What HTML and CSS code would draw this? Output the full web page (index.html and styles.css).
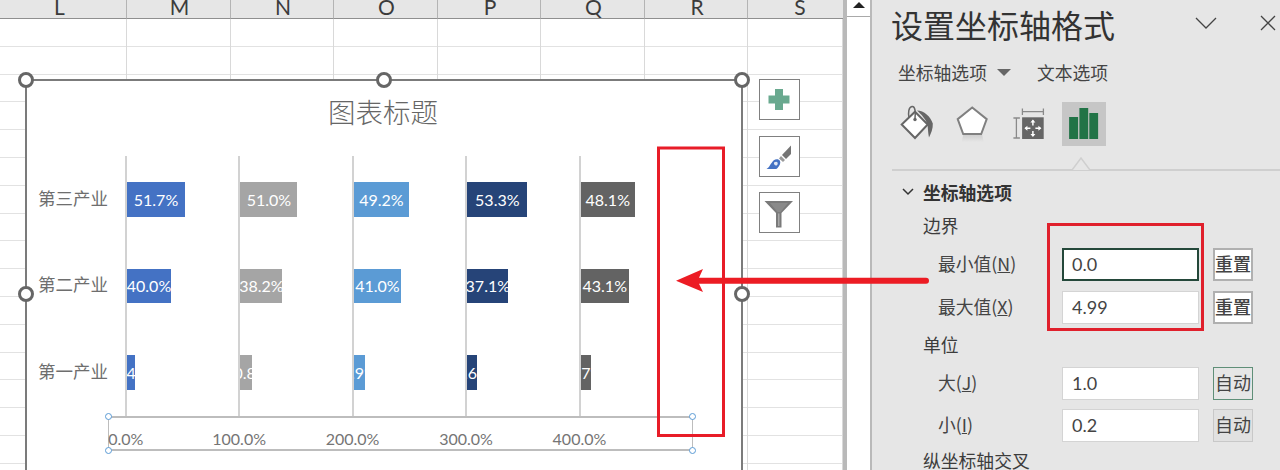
FILE: index.html
```html
<!DOCTYPE html>
<html lang="zh-CN">
<head>
<meta charset="utf-8">
<title>设置坐标轴格式</title>
<link rel="stylesheet" href="styles.css">
</head>
<body>
<div class="app">
  <section class="sheet">
    <div class="col-head">L</div><div class="col-head">M</div><div class="col-head">N</div><div class="col-head">O</div><div class="col-head">P</div><div class="col-head">Q</div><div class="col-head">R</div><div class="col-head">S</div>
    <div class="col-body"></div><div class="col-body"></div><div class="col-body"></div><div class="col-body"></div><div class="col-body"></div><div class="col-body"></div><div class="col-body"></div><div class="col-body"></div>

    <div class="chart">
      <div class="chart-title">图表标题</div>
      <div class="plot">
        <div class="cat">第三产业</div>
        <div class="cell"><div class="bar s1" style="width:58px"><span>51.7%</span></div></div>
        <div class="cell"><div class="bar s2" style="width:57px"><span>51.0%</span></div></div>
        <div class="cell"><div class="bar s3" style="width:55px"><span>49.2%</span></div></div>
        <div class="cell"><div class="bar s4" style="width:60px"><span>53.3%</span></div></div>
        <div class="cell"><div class="bar s5" style="width:54px"><span>48.1%</span></div></div>
        <div class="cat">第二产业</div>
        <div class="cell"><div class="bar s1" style="width:44px"><span>40.0%</span></div></div>
        <div class="cell"><div class="bar s2" style="width:42px"><span>38.2%</span></div></div>
        <div class="cell"><div class="bar s3" style="width:47px"><span>41.0%</span></div></div>
        <div class="cell"><div class="bar s4" style="width:41px"><span>37.1%</span></div></div>
        <div class="cell"><div class="bar s5" style="width:48px"><span>43.1%</span></div></div>
        <div class="cat">第一产业</div>
        <div class="cell"><div class="bar s1" style="width:8px"><span>8.4%</span></div></div>
        <div class="cell"><div class="bar s2" style="width:12px"><span>10.8%</span></div></div>
        <div class="cell"><div class="bar s3" style="width:11px"><span>9.9%</span></div></div>
        <div class="cell"><div class="bar s4" style="width:10px"><span>9.6%</span></div></div>
        <div class="cell"><div class="bar s5" style="width:10px"><span>8.7%</span></div></div>
      </div>
      <div class="axis">
        <div class="ticks"><span>0.0%</span><span>100.0%</span><span>200.0%</span><span>300.0%</span><span>400.0%</span></div>
        <i class="dot dot-tl"></i><i class="dot dot-tr"></i><i class="dot dot-bl"></i><i class="dot dot-br"></i>
      </div>
      <div class="legend"><span>年份</span><span>年份</span><span>年份</span><span>年份</span><span>年份</span><span>年份</span><span>年份</span><span>年份</span><span>年份</span></div>
      <i class="handle h-tl"></i><i class="handle h-tm"></i><i class="handle h-tr"></i><i class="handle h-ml"></i><i class="handle h-mr"></i>
    </div>

    <div class="chart-tools">
      <button class="tool" type="button" aria-label="图表元素">
        <svg viewBox="760 80 39 39" width="39" height="39"><path d="M775 89h8v6.500h6.500v8H783v6.500h-8v-6.500h-6.500v-8h6.500z" fill="#69a98f"/></svg>
      </button>
      <button class="tool" type="button" aria-label="图表样式">
        <svg viewBox="760 136.500 39 39" width="39" height="39">
          <path d="M791 145 791 153.500 786 158.500 782 154.500z" fill="#757575"/>
          <path d="M781 155.500 785 159.500 783 161.500 779 158z" fill="#9a9a9a"/>
          <path d="M766.500 168.500c3-1.500 4-5.500 7-8.500 2.500-2 5.500-1.500 6.500.5 1 2-.5 5-2.500 7-.5.500-1 1-1.500 1z" fill="#4472c4"/>
          <path d="M774 162c1.500-1 3-1 3.500 0 .5 1 0 2.500-1 3-1.500.5-3-1.500-2.500-3z" fill="#dfe7f5"/>
        </svg>
      </button>
      <button class="tool" type="button" aria-label="图表筛选器">
        <svg viewBox="760 193 39 39" width="39" height="39">
          <path d="M764.500 201h28.500l-11.500 12v14.500h-5.500V213z" fill="#7a7a7a"/>
          <path d="M770 203h18l-7.500 9h-3z" fill="#8a8a8a"/>
          <path d="M778 213.500h1.500V226H778z" fill="#a8a8a8"/>
        </svg>
      </button>
    </div>
  </section>

  <aside class="scrollbar"><div class="scroll-up"><i class="up-arrow"></i></div></aside>

  <aside class="pane">
    <header class="pane-head">
      <h1 class="pane-title">设置坐标轴格式</h1>
      <svg class="head-icon chev" viewBox="0 0 22 12" width="22" height="12"><path d="M1 1l10 10L21 1" fill="none" stroke="#444" stroke-width="1.300"/></svg>
      <svg class="head-icon close" viewBox="0 0 16 16" width="16" height="16"><path d="M1 1l14 14M15 1L1 15" fill="none" stroke="#444" stroke-width="1.300"/></svg>
    </header>
    <nav class="tabs">
      <span class="tab">坐标轴选项</span>
      <i class="tab-caret"></i>
      <span class="tab tab-text">文本选项</span>
    </nav>
    <div class="icon-row">
      <svg class="opt-icon" viewBox="893 102 44 44" width="44" height="44">
        <path d="M915 111.700 927.700 124.500 915 138 901.700 124.500z" fill="#fff" stroke="#666" stroke-width="2"/>
        <path d="M909 118c-1-5-.5-11 3-11.500 3.500-.5 3.500 6 3 12" fill="none" stroke="#666" stroke-width="1.500"/>
        <circle cx="915" cy="119.500" r="1.700" fill="#666"/>
        <path d="M917 110.500c7 0 13.500 6 15.800 13 .3 5-1.800 10-3.800 14-1-5-1-9-1.500-13-1.500-5-6-10-10.500-14z" fill="#666"/>
      </svg>
      <svg class="opt-icon" viewBox="949.300 102 44 44" width="44" height="44">
        <defs><linearGradient id="fade" x1="0" y1="0" x2="0" y2="1"><stop offset="0" stop-color="#cfcfcf"/><stop offset="1" stop-color="#e6e6e6"/></linearGradient></defs>
        <path d="M963.500 135h19l1.500 7h-22z" fill="url(#fade)"/>
        <path d="M972.500 107.500 987 119.200 981.500 134h-18L958 119.200z" fill="#fff" stroke="#808080" stroke-width="2"/>
      </svg>
      <svg class="opt-icon" viewBox="1005.600 102 44 44" width="44" height="44">
        <path d="M1022 111.700h21M1022 108.500v6.500M1043 108.500v6.500M1016 118v20M1013 118h6.500M1013 138h6.500" fill="none" stroke="#8a8a8a" stroke-width="1.300"/>
        <rect x="1021.700" y="117.300" width="21.600" height="21.700" fill="#666"/>
        <path d="M1032.500 120.500v5M1032.500 131v5M1025 128.200h5M1035 128.200h5" stroke="#fff" stroke-width="1.500"/>
        <path d="M1032.500 119.500l2.500 3h-5zM1032.500 137l2.500-3h-5zM1024 128.200l3-2.500v5zM1041 128.200l-3-2.500v5z" fill="#fff"/>
      </svg>
      <svg class="opt-icon active" viewBox="1061.900 102 44 44" width="44" height="44">
        <rect x="1069" y="117" width="9" height="22" fill="#217346"/>
        <rect x="1079.300" y="108" width="8.800" height="31" fill="#217346"/>
        <rect x="1089.200" y="113" width="8.800" height="26" fill="#217346"/>
      </svg>
    </div>
    <div class="divider">
      <svg class="notch" viewBox="0 0 18 14" width="18" height="14"><path d="M0 13 9 1l9 12" fill="#e6e6e6" stroke="#cfcfcf" stroke-width="1.500"/></svg>
    </div>
    <div class="section-head">
      <svg viewBox="0 0 12 8" width="12" height="8"><path d="M1 1l5 5 5-5" fill="none" stroke="#333" stroke-width="1.500"/></svg>
      <strong>坐标轴选项</strong>
    </div>
    <div class="group-label">边界</div>
    <div class="field">
      <label class="field-label">最小值(<u>N</u>)</label>
      <div class="input focused">0.0</div>
      <div class="btn btn-reset">重置</div>
    </div>
    <div class="field gap-10">
      <label class="field-label">最大值(<u>X</u>)</label>
      <div class="input">4.99</div>
      <div class="btn btn-reset">重置</div>
    </div>
    <div class="group-label gap-4">单位</div>
    <div class="field">
      <label class="field-label">大(<u>J</u>)</label>
      <div class="input">1.0</div>
      <div class="btn btn-auto-on">自动</div>
    </div>
    <div class="field gap-9">
      <label class="field-label">小(<u>I</u>)</label>
      <div class="input">0.2</div>
      <div class="btn btn-auto">自动</div>
    </div>
    <div class="group-label gap-2">纵坐标轴交叉</div>
  </aside>
</div>

<svg class="annotations" viewBox="0 0 1280 470" width="1280" height="470">
  <rect x="658.500" y="148" width="65" height="287.500" fill="none" stroke="#e81c28" stroke-width="3"/>
  <rect x="1048.500" y="224.500" width="154" height="105" fill="none" stroke="#e0202c" stroke-width="3"/>
  <path d="M703 269 676 280.700 703 292 699 283.700H926a3 3 0 0 0 0-6H699z" fill="#ec1c24"/>
</svg>
</body>
</html>
```
FILE: styles.css
```css
* { box-sizing: border-box; }
html, body { margin: 0; padding: 0; width: 1280px; height: 470px; overflow: hidden; background: #fff; }
body { font-family: "Noto Sans CJK SC", "Noto Sans", sans-serif; color: #444; }

.app { display: flex; width: 1280px; height: 470px; }

/* Worksheet */
.sheet {
  position: relative;
  width: 847px;
  height: 470px;
  overflow: hidden;
  display: grid;
  grid-template-columns: 127px 104px 103px 104px 103px 104px 103px 95px;
  grid-template-rows: 19px 451px;
  border-right: 4px solid #b9b9b9;
  background: #fff;
}
.col-head {
  background: #e6e6e6;
  border-right: 1px solid #b4b4b4;
  border-bottom: 1px solid #8f8f8f;
  padding-left: 2px;
  font-family: Lato, "Liberation Sans", sans-serif;
  font-size: 21px;
  line-height: 14px;
  color: #3b3b3b;
  text-align: center;
  overflow: hidden;
}
.col-head:first-child { padding: 0 7px 0 0; }
.col-head:nth-child(8) { border-right: 0; padding-left: 9px; }
.col-body {
  border-right: 1px solid #d9d9d9;
  background-image: repeating-linear-gradient(to bottom, transparent 0, transparent 26.8px, #e2e2e2 26.8px, #e2e2e2 27.8px);
}
.col-body:last-of-type { border-right: 0; }

/* Chart */
.chart {
  position: absolute;
  left: 25px;
  top: 79px;
  width: 718px;
  height: 460px;
  border: 2px solid #7b7b7b;
  background: #fff;
}
.chart-title {
  height: 62px;
  margin-bottom: 13px;
  padding: 0 2px 3px 0;
  display: flex;
  align-items: center;
  justify-content: center;
  font-size: 27.500px;
  font-weight: 300;
  color: #666;
}
.plot {
  display: grid;
  grid-template-columns: 98px repeat(5, 113.450px);
  grid-template-rows: repeat(3, 86.670px);
}
.cat {
  display: flex;
  align-items: center;
  padding: 0 0 4px 11px;
  font-size: 17.500px;
  font-weight: 400;
  color: #6e6e6e;
}
.cell {
  display: flex;
  align-items: center;
  border-left: 2px solid #d2d2d2;
}
.bar {
  height: 34.500px;
  display: flex;
  align-items: center;
  justify-content: center;
  overflow: hidden;
  flex: none;
  color: #fff;
  font-family: Lato, "Liberation Sans", sans-serif;
  font-size: 16px;
  white-space: nowrap;
}
.bar span { flex: none; }
.s1 { background: #4472c4; }
.s2 { background: #a5a5a5; }
.s3 { background: #5b9bd5; }
.s4 { background: #264478; }
.s5 { background: #636363; }

.axis {
  position: relative;
  width: 585px;
  height: 35px;
  margin-left: 81px;
  border: 1px solid #bdbdbd;
  border-top-width: 2px;
  border-bottom-width: 2px;
  background: #fff;
}
.ticks {
  display: flex;
  margin-left: -40px;
  padding-top: 10px;
  font-family: Lato, "Liberation Sans", sans-serif;
  font-size: 16px;
  line-height: 22px;
  color: #757575;
}
.ticks span { flex: 0 0 113.450px; text-align: center; }
.dot {
  position: absolute;
  width: 7px;
  height: 7px;
  border: 1.500px solid #5b9bd5;
  border-radius: 50%;
  background: #fff;
}
.dot-tl { left: -4px; top: -5px; }
.dot-tr { right: -4px; top: -5px; }
.dot-bl { left: -4px; bottom: -5px; }
.dot-br { right: -4px; bottom: -5px; }

.legend {
  display: flex;
  margin: 17px 0 0 72px;
  font-size: 18px;
  line-height: 20px;
  color: #777;
}
.legend span { flex: 0 0 71px; }

.handle {
  position: absolute;
  width: 16px;
  height: 16px;
  border: 3px solid #666;
  border-radius: 50%;
  background: #fff;
}
.h-tl { left: -9px; top: -9px; }
.h-tm { left: 349px; top: -9px; }
.h-tr { left: 707px; top: -9px; }
.h-ml { left: -9px; top: 205px; }
.h-mr { left: 707px; top: 205px; }

.chart-tools {
  position: absolute;
  left: 759px;
  top: 79px;
  display: flex;
  flex-direction: column;
  gap: 15.500px;
}
.tool {
  width: 41px;
  height: 41px;
  padding: 0;
  border: 1px solid #808080;
  background: #fff;
  display: block;
}
.tool svg { display: block; }

/* Scrollbar */
.scrollbar { width: 23px; height: 470px; background: #fff; }
.scroll-up {
  height: 17px;
  border-bottom: 1px solid #a9a9a9;
  display: flex;
  justify-content: center;
  padding-top: 2px;
}
.up-arrow {
  width: 0;
  height: 0;
  border-left: 6px solid transparent;
  border-right: 6px solid transparent;
  border-bottom: 6px solid #222;
}

/* Format pane */
.pane {
  width: 410px;
  height: 470px;
  overflow: hidden;
  background: #e6e6e6;
  border-left: 2px solid #b9b9b9;
}
.pane-head {
  position: relative;
  height: 52px;
  padding-left: 19px;
  display: flex;
  align-items: flex-start;
}
.pane-title {
  margin: 0;
  font-size: 32px;
  font-weight: 400;
  color: #333;
  line-height: 48px;
}
.head-icon { position: absolute; top: 15px; }
.chev { left: 323px; top: 17px; }
.close { left: 388px; }

.tabs {
  height: 42px;
  padding: 0 0 2px 26px;
  display: flex;
  align-items: center;
  font-size: 17.800px;
  color: #444;
}
.tab-caret {
  width: 0;
  height: 0;
  margin-left: 10px;
  border-left: 7px solid transparent;
  border-right: 7px solid transparent;
  border-top: 7px solid #666;
}
.tab-text { margin-left: 26px; }

.icon-row {
  display: flex;
  gap: 12.300px;
  height: 44px;
  margin-top: 8px;
  padding-left: 21px;
}
.opt-icon { display: block; flex: none; }
.opt-icon.active { background: #c6c6c6; }

.divider {
  position: relative;
  height: 2px;
  margin: 23px 0 0 20px;
  background: #cfcfcf;
}
.notch { position: absolute; left: 180px; top: -12px; }

.section-head {
  height: 32px;
  margin-top: 6px;
  padding: 0 0 2px 30px;
  display: flex;
  align-items: center;
  gap: 9px;
  font-size: 17.800px;
  color: #333;
}
.section-head strong { font-weight: 700; }

.group-label {
  height: 36px;
  padding: 0 0 4px 51px;
  display: flex;
  align-items: center;
  font-size: 17.800px;
  color: #3c3c3c;
  white-space: nowrap;
}

.field {
  display: flex;
  align-items: center;
  height: 33px;
  margin-top: 3px;
  padding-left: 66px;
}
.field-label {
  width: 124px;
  flex: none;
  padding-bottom: 4px;
  font-size: 17.800px;
  color: #444;
  white-space: nowrap;
}
.input {
  width: 137px;
  height: 33px;
  flex: none;
  padding: 0 0 2px 9px;
  display: flex;
  align-items: center;
  background: #fff;
  border: 1px solid #d4d4d4;
  font-family: Lato, "Liberation Sans", sans-serif;
  font-size: 18px;
  color: #444;
}
.input.focused { border: 2px solid #24483a; padding-left: 8px; }
.btn {
  width: 40px;
  height: 33px;
  flex: none;
  margin-left: 14px;
  padding-bottom: 3px;
  display: flex;
  align-items: center;
  justify-content: center;
  font-size: 18px;
  color: #444;
  white-space: nowrap;
  border: 2px solid #b0b0b0;
}
.btn-reset { background: #fff; font-weight: 500; }
.btn-auto-on { background: #e6e6e6; border: 1px solid #5f8f78; }
.btn-auto { background: #e1e1e1; border: 1px solid #c8c8c8; }

.gap-10 { margin-top: 10px; }
.gap-9 { margin-top: 9px; }
.gap-4 { margin-top: 4px; }
.gap-2 { margin-top: 2px; }

.annotations { position: absolute; left: 0; top: 0; pointer-events: none; }
```
